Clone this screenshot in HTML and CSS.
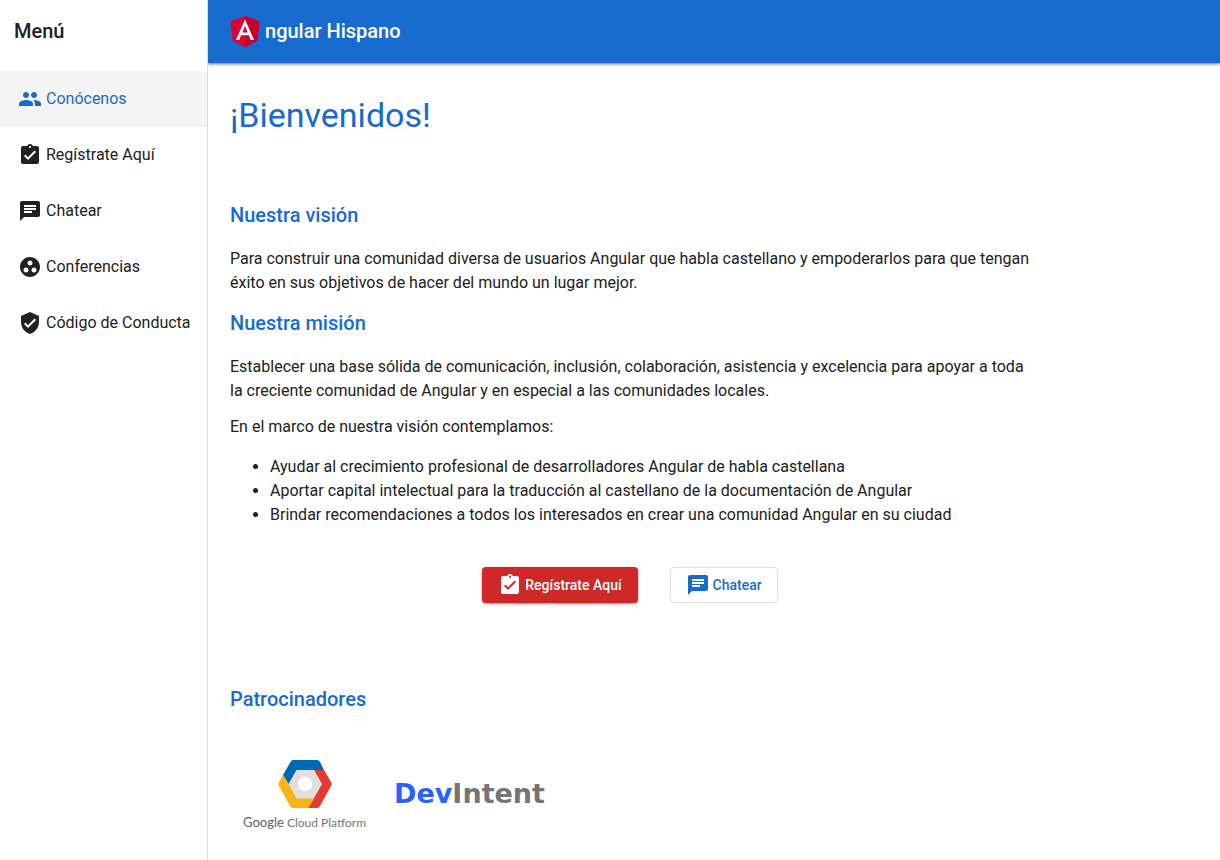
FILE: index.html
```html
<!DOCTYPE html>
<html lang="es">
<head>
<meta charset="utf-8">
<meta name="viewport" content="width=device-width, initial-scale=1">
<title>Angular Hispano</title>
<link rel="stylesheet" href="styles.css">
</head>
<body>
<svg class="sprite" aria-hidden="true">
  <symbol id="people" viewBox="0 0 24 24"><path d="M16 11c1.66 0 2.99-1.34 2.99-3S17.66 5 16 5s-3 1.34-3 3 1.34 3 3 3zm-8 0c1.66 0 2.99-1.34 2.99-3S9.66 5 8 5 5 6.34 5 8s1.34 3 3 3zm0 2c-2.33 0-7 1.17-7 3.5V19h14v-2.500c0-2.330-4.670-3.500-7-3.500zm8 0c-.29 0-.62.02-.97.05 1.160.84 1.970 1.970 1.970 3.450V19h6v-2.500c0-2.330-4.670-3.500-7-3.500z"/></symbol>
  <symbol id="task" viewBox="0 0 24 24"><path d="M19 3h-4.180C14.400 1.840 13.300 1 12 1c-1.300 0-2.400.84-2.820 2H5c-1.100 0-2 .9-2 2v14c0 1.100.9 2 2 2h14c1.100 0 2-.9 2-2V5c0-1.100-.9-2-2-2zm-7 0c.55 0 1 .45 1 1s-.45 1-1 1-1-.45-1-1 .45-1 1-1zm-2 14l-4-4 1.410-1.410L10 14.170l6.590-6.590L18 9l-8 8z"/></symbol>
  <symbol id="chat" viewBox="0 0 24 24"><path d="M20 2H4c-1.100 0-1.990.9-1.990 2L2 22l4-4h14c1.100 0 2-.9 2-2V4c0-1.100-.9-2-2-2zM6 9h12v2H6V9zm8 5H6v-2h8v2zm4-6H6V6h12v2z"/></symbol>
  <symbol id="group" viewBox="0 0 24 24"><path d="M12 2C6.480 2 2 6.480 2 12s4.480 10 10 10 10-4.480 10-10S17.520 2 12 2zM8 17.500c-1.380 0-2.500-1.120-2.500-2.500s1.120-2.500 2.500-2.500 2.500 1.120 2.500 2.500-1.120 2.500-2.500 2.500zM9.500 8c0-1.380 1.120-2.500 2.500-2.500s2.500 1.120 2.500 2.500-1.120 2.500-2.500 2.500S9.500 9.380 9.500 8zm6.500 9.500c-1.380 0-2.500-1.120-2.500-2.500s1.120-2.500 2.500-2.500 2.500 1.120 2.500 2.500-1.120 2.500-2.500 2.500z"/></symbol>
  <symbol id="shield" viewBox="0 0 24 24"><path d="M12 1L3 5v6c0 5.550 3.840 10.740 9 12 5.160-1.260 9-6.450 9-12V5l-9-4zm-2 16l-4-4 1.410-1.410L10 14.170l6.590-6.590L18 9l-8 8z"/></symbol>
</svg>
<div class="layout">
  <aside class="sidebar">
    <div class="sidebar-title">Menú</div>
    <nav class="menu">
      <a class="menu-item active" href="#conocenos"><svg class="icon"><use href="#people"/></svg>Conócenos</a>
      <a class="menu-item" href="#registro"><svg class="icon"><use href="#task"/></svg>Regístrate Aquí</a>
      <a class="menu-item" href="#chat-page"><svg class="icon"><use href="#chat"/></svg>Chatear</a>
      <a class="menu-item" href="#conferencias"><svg class="icon"><use href="#group"/></svg>Conferencias</a>
      <a class="menu-item" href="#conducta"><svg class="icon"><use href="#shield"/></svg>Código de Conducta</a>
    </nav>
  </aside>
  <div class="page">
    <header class="toolbar">
      <svg class="angular" viewBox="30 30 190 204" role="img" aria-label="A"><path fill="#dd0031" d="M125 30 31.900 63.200l14.200 123.100L125 230l78.900-43.700 14.200-123.100z"/><path fill="#c3002f" d="M125 30v200l78.900-43.700 14.200-123.100z"/><path fill="#fff" d="M125 52.100 66.800 182.600h21.700l11.700-29.200h49.400l11.700 29.200H183L125 52.100zm17 83.300h-34l17-40.900z"/></svg>
      <span class="brand">ngular Hispano</span>
    </header>
    <main class="content" id="conocenos">
      <h1>¡Bienvenidos!</h1>
      <h2>Nuestra visión</h2>
      <p>Para construir una comunidad diversa de usuarios Angular que habla castellano y empoderarlos para que tengan éxito en sus objetivos de hacer del mundo un lugar mejor.</p>
      <h2>Nuestra misión</h2>
      <p>Establecer una base sólida de comunicación, inclusión, colaboración, asistencia y excelencia para apoyar a toda la creciente comunidad de Angular y en especial a las comunidades locales.</p>
      <p>En el marco de nuestra visión contemplamos:</p>
      <ul>
        <li>Ayudar al crecimiento profesional de desarrolladores Angular de habla castellana</li>
        <li>Aportar capital intelectual para la traducción al castellano de la documentación de Angular</li>
        <li>Brindar recomendaciones a todos los interesados en crear una comunidad Angular en su ciudad</li>
      </ul>
      <div class="actions">
        <button class="btn primary" type="button"><svg class="icon"><use href="#task"/></svg>Regístrate Aquí</button>
        <button class="btn outline" type="button"><svg class="icon"><use href="#chat"/></svg>Chatear</button>
      </div>
      <h2>Patrocinadores</h2>
      <div class="sponsors">
        <a class="gcp" href="#gcp">
          <svg class="gcp-mark" viewBox="0 0 54 48" aria-hidden="true">
            <path fill="#dfe0e2" d="M18 9h18l9 15-9 15H18L9 24z"/>
            <path fill="#0069b4" d="M15 0h24q2 0 3 2l4 8H18.500L10.500 24 5 15 12.500 2Q13.500 0 15 0z"/>
            <path fill="#e63a2e" d="M36 10h10l7.300 12.500q.7 1.500 0 3L42 46q-1 2-3 2H30l6-10 8-14z"/>
            <path fill="#f8b417" d="M5 15l5.500 9 8 14.500H36L30.500 48H15q-2 0-3-2L.7 25.500q-.7-1.500 0-3z"/>
            <circle cx="27" cy="24" r="7.200" fill="#fff"/>
          </svg>
          <span class="gcp-name"><span class="google">Google</span> Cloud Platform</span>
        </a>
        <a class="devintent" href="#devintent"><span class="dev">Dev</span>Intent</a>
      </div>
    </main>
  </div>
</div>
</body>
</html>
```

FILE: styles.css
```css
* { box-sizing: border-box; }
body {
  margin: 0;
  background: #fff;
  color: #212121;
  font: 400 16px/24px Roboto, sans-serif;
}
a { color: inherit; text-decoration: none; }
.sprite { display: none; }
.icon { flex: none; width: 24px; height: 24px; fill: currentColor; }
.layout { display: flex; min-height: 100vh; }
.sidebar { flex: none; width: 208px; border-right: 1px solid #dcdcdc; }
.sidebar-title {
  padding: 15px 14px 24px;
  font-size: 20px;
  font-weight: 500;
  line-height: 32px;
}
.menu-item {
  display: flex;
  align-items: center;
  gap: 4px;
  height: 56px;
  padding: 0 18px;
  white-space: nowrap;
}
.active { background: #f4f4f4; color: #186bce; }
.page { flex: 1; min-width: 0; }
.toolbar {
  display: flex;
  align-items: center;
  gap: 5px;
  height: 63px;
  padding: 0 22px;
  background: #186bce;
  box-shadow: 0 1px 3px rgba(0, 0, 0, .6);
  clip-path: inset(0 0 -6px 0);
  color: #fff;
}
.angular { width: 30px; height: 32px; }
.brand { padding-bottom: 2px; font-size: 20px; font-weight: 500; }
.content { max-width: 844px; padding: 28px 22px; }
h1, h2 { margin: 0; color: #186bce; }
h1 {
  margin-bottom: 60px;
  font-size: 34px;
  font-weight: 400;
  line-height: 48px;
}
h2 {
  margin-bottom: 16px;
  font-size: 20px;
  font-weight: 500;
  line-height: 32px;
}
p { margin: 0 0 12px; }
ul { margin: 16px 0 0; padding-left: 40px; }
.actions {
  display: flex;
  justify-content: center;
  gap: 32px;
  padding: 40px 0 80px;
}
.btn {
  display: flex;
  align-items: center;
  gap: 3px;
  height: 36px;
  padding: 0 16px;
  border: 0;
  border-radius: 4px;
  font: 500 14px/36px Roboto, sans-serif;
}
.primary {
  background: #ce2829;
  box-shadow: 0 1px 3px rgba(0, 0, 0, .4);
  color: #fff;
}
.outline {
  padding: 0 15px;
  border: 1px solid #e0e0e0;
  background: #fff;
  color: #186bce;
}
.sponsors { display: flex; gap: 28px; padding: 29px 13px 0; }
.gcp { display: flex; flex-direction: column; align-items: center; gap: 5px; }
.gcp-mark { width: 54px; height: 48px; }
.gcp-name {
  color: #757575;
  font: 400 12px/18px Lato, sans-serif;
  white-space: nowrap;
}
.google { color: #616161; font-size: 13px; }
.devintent {
  padding-top: 18px;
  color: #757575;
  font: 700 27px/32px "DejaVu Sans", sans-serif;
}
.dev { color: #2962ff; }
```
